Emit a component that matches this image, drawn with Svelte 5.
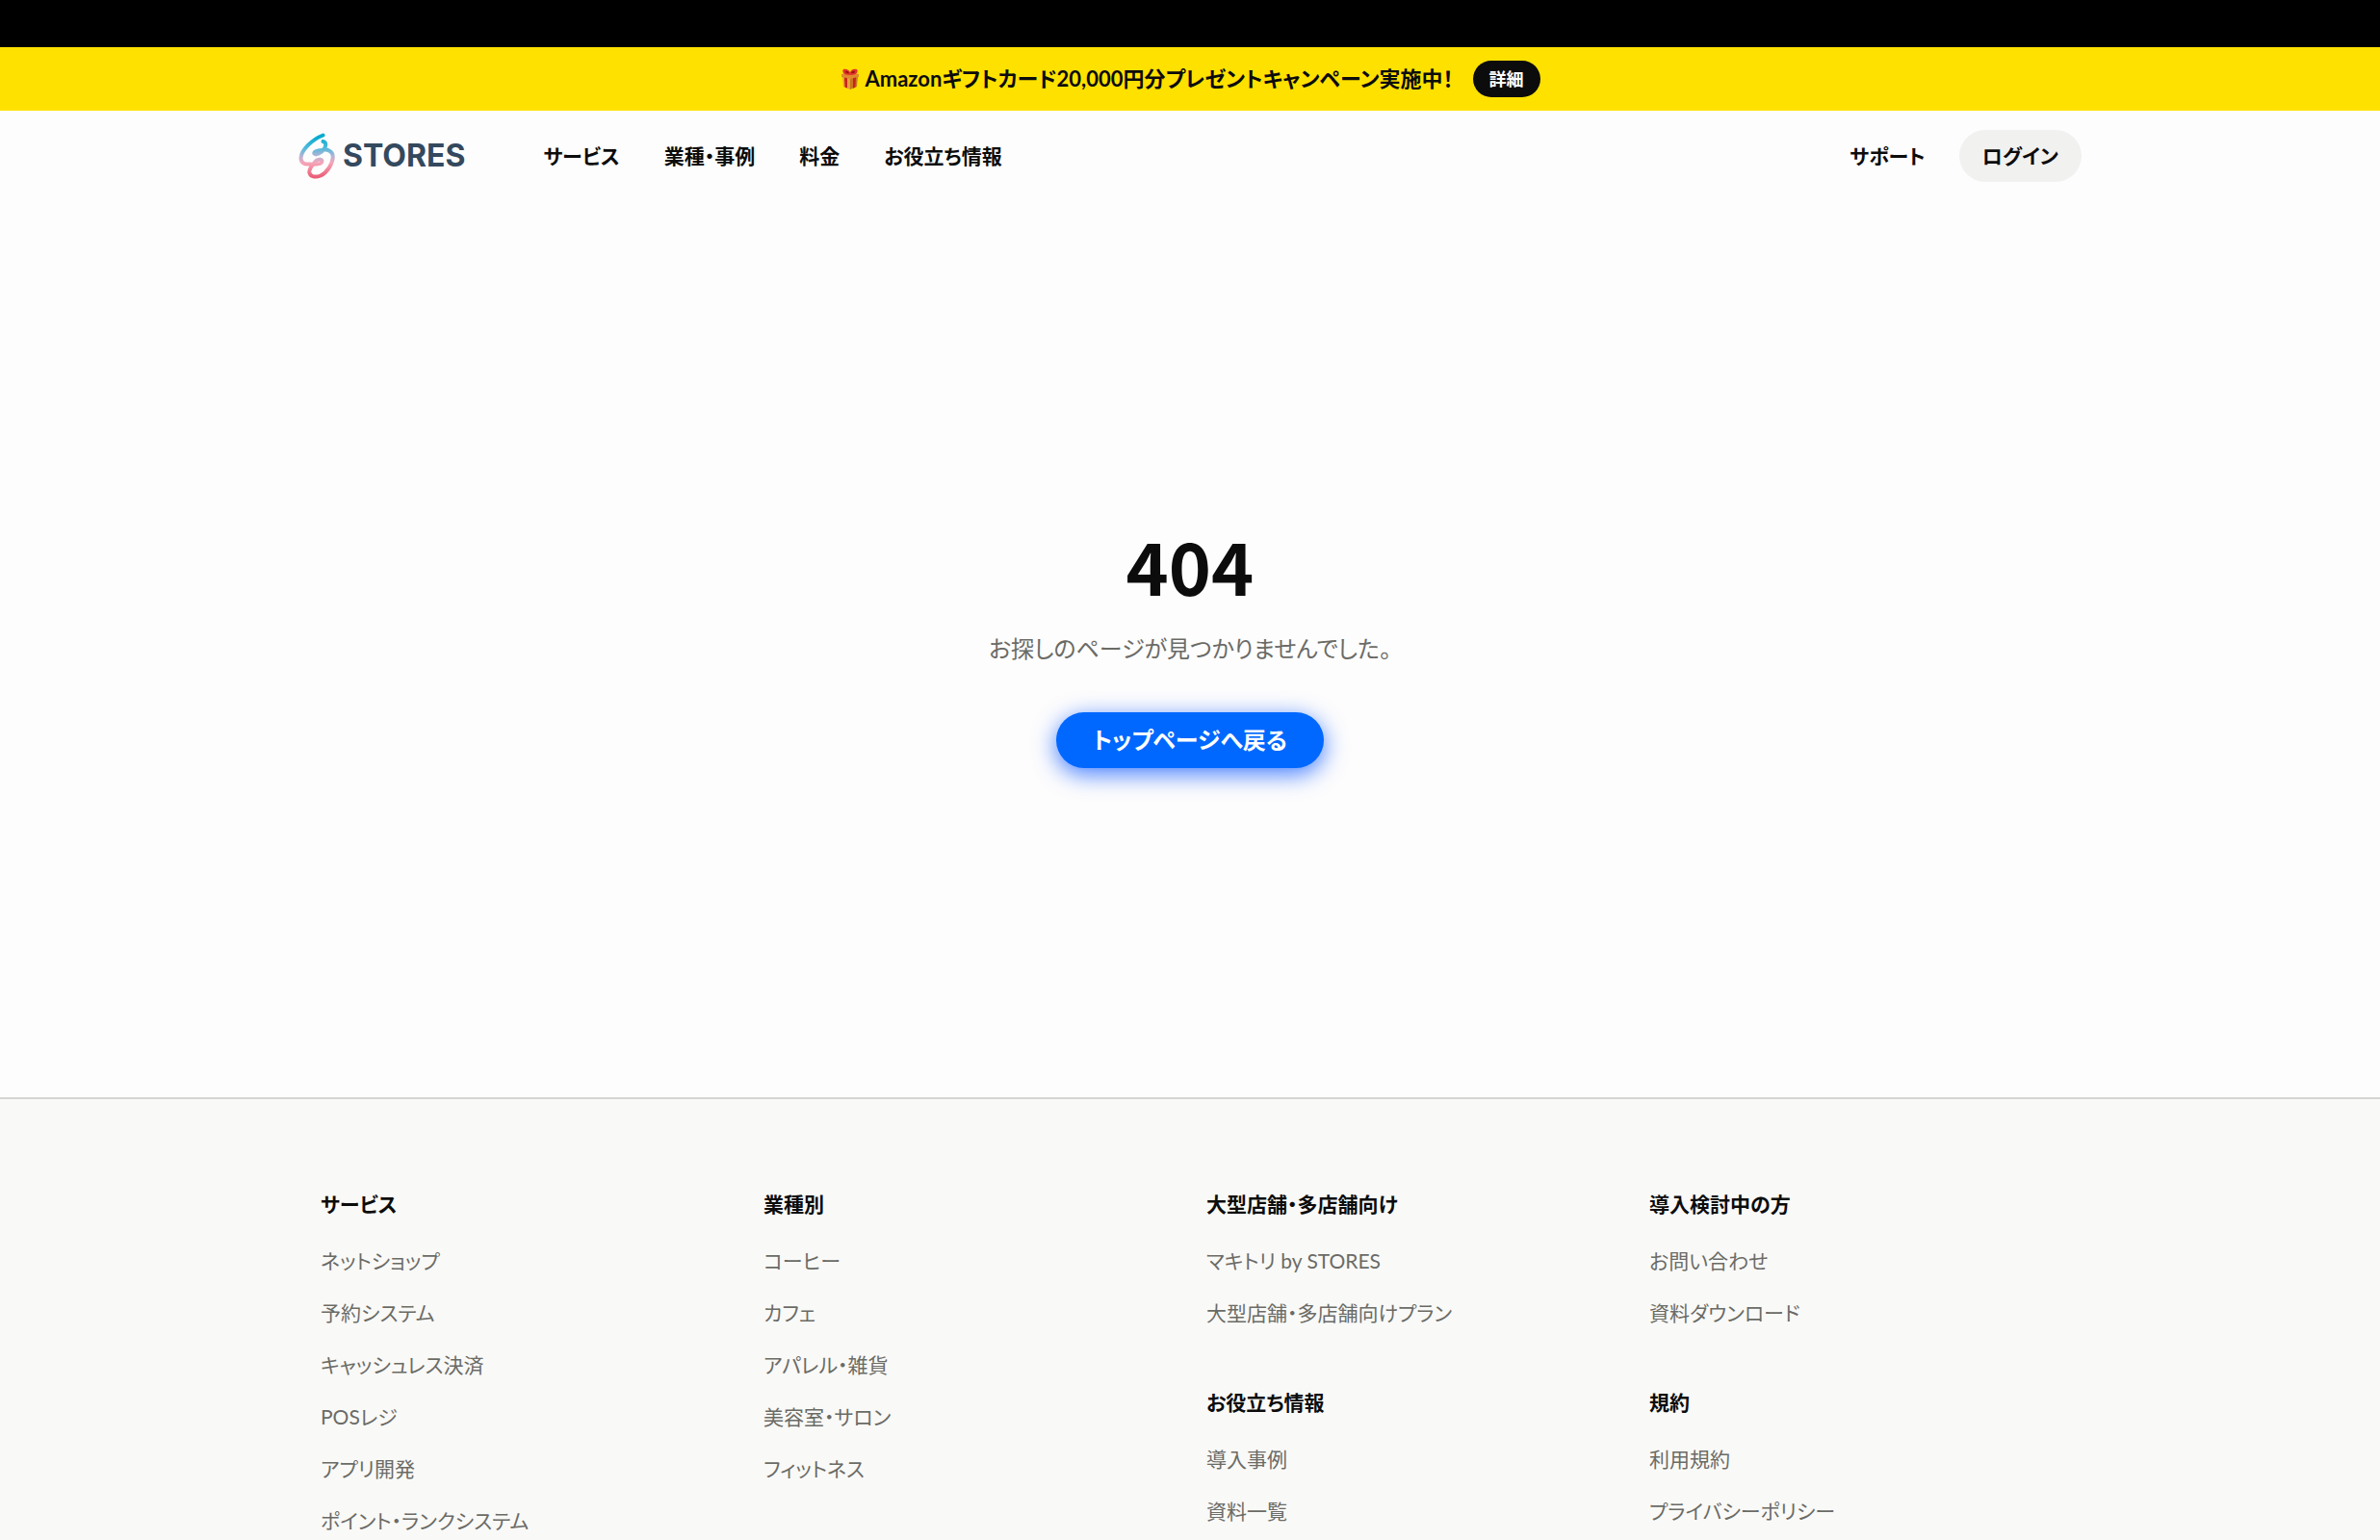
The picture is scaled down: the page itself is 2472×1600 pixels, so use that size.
<script lang="ts">
	const navItems = ['サービス', '業種・事例', '料金', 'お役立ち情報'];

	const footerColumns = [
		[
			{
				title: 'サービス',
				links: ['ネットショップ', '予約システム', 'キャッシュレス決済', 'POSレジ', 'アプリ開発', 'ポイント・ランクシステム']
			}
		],
		[
			{
				title: '業種別',
				links: ['コーヒー', 'カフェ', 'アパレル・雑貨', '美容室・サロン', 'フィットネス']
			}
		],
		[
			{ title: '大型店舗・多店舗向け', links: ['マキトリ by STORES', '大型店舗・多店舗向けプラン'] },
			{ title: 'お役立ち情報', links: ['導入事例', '資料一覧'] }
		],
		[
			{ title: '導入検討中の方', links: ['お問い合わせ', '資料ダウンロード'] },
			{ title: '規約', links: ['利用規約', 'プライバシーポリシー'] }
		]
	];
</script>

<div class="page">
	<div class="topbar"></div>

	<div class="campaign">
		<p class="campaign-text">
			<svg class="gift" viewBox="0 0 20 22" aria-hidden="true">
				<path fill="#e9a03a" d="M2 8l8 2v12l-7-3z" />
				<path fill="#c9761f" d="M10 10l8-2-1 11-7 3z" />
				<path fill="#e08a2c" d="M1 6l9-2 9 2v3l-9 2-9-2z" />
				<path fill="#c9241b" d="M4 9.500l3 .7v10.400l-2.500-1zM13 10.200l3-.7-.6 10.200-2.400 1z" />
				<path fill="#e2342a" d="M3 1c3-1 6 1 7 3 1-3 4-4 7-3 2 3-1 6-6 6h-2C4 7 1 4 3 1z" />
				<path fill="#96170f" d="M5 3c2-.5 3 0 4 2-2 .6-4 0-4-2zm10 0c-2-.5-3 0-4 2 2 .6 4 0 4-2z" />
			</svg>
			<span>Amazonギフトカード20,000円分プレゼントキャンペーン実施中！</span>
		</p>
		<a class="campaign-link" href="#campaign">詳細</a>
	</div>

	<header class="header">
		<a class="logo" href="#top">
			<svg class="logo-mark" viewBox="0 0 38 48" aria-hidden="true">
				<defs>
					<linearGradient id="mark" x1="0" y1="0" x2="0" y2="48" gradientUnits="userSpaceOnUse">
						<stop offset="0.1" stop-color="#08acd0" />
						<stop offset="0.33" stop-color="#4fbadb" />
						<stop offset="0.5" stop-color="#b3b4d6" />
						<stop offset="0.65" stop-color="#f6a5b8" />
						<stop offset="1" stop-color="#e9546f" />
					</linearGradient>
				</defs>
				<path
					class="stroke"
					d="M25.500 2.500C14 7 3 18 2.500 26C2.500 31 6 33 12 32.500C18 33 24 33 24.500 29.500C24.500 26.500 19 27.500 16.500 31C13.500 34.500 11 37.500 11.300 41C12 46 18 46.500 23 44.500C30 41 35.500 32 35.800 25C35.800 19 30 16.500 24 18C20 18.500 16 19.500 16.300 21.500C18 24 24 20.500 26.500 17C29 13.500 29 10 25.500 9"
				/>
			</svg>
			<span class="logo-text">STORES</span>
		</a>
		<nav class="nav">
			{#each navItems as item}
				<a href="#nav">{item}</a>
			{/each}
		</nav>
		<div class="account">
			<a href="#support">サポート</a>
			<a class="login" href="#login">ログイン</a>
		</div>
	</header>

	<main class="main">
		<h1>404</h1>
		<p>お探しのページが見つかりませんでした。</p>
		<a class="back" href="#top">トップページへ戻る</a>
	</main>

	<footer class="footer">
		<div class="footer-inner">
			{#each footerColumns as column}
				<div class="column">
					{#each column as group}
						<section>
							<h2>{group.title}</h2>
							<ul>
								{#each group.links as link}
									<li><a href="#link">{link}</a></li>
								{/each}
							</ul>
						</section>
					{/each}
				</div>
			{/each}
		</div>
	</footer>
</div>

<style>
:global(body) {
	margin: 0;
	background: #fdfdfd;
}

.page {
	height: 100vh;
	overflow: hidden;
	color: #0c0c0c;
	font-family: Lato, "Noto Sans CJK JP", sans-serif;
	font-size: 21px;
	line-height: 30px;
	font-feature-settings: "palt";
}

a {
	color: inherit;
	text-decoration: none;
}

h1,
h2,
p,
ul {
	margin: 0;
	padding: 0;
}

.topbar {
	height: 49px;
	background: #000;
}

.campaign {
	display: flex;
	align-items: center;
	justify-content: center;
	gap: 20px;
	height: 66px;
	background: #ffe100;
	font-weight: 700;
}

.campaign-text {
	display: flex;
	align-items: center;
	gap: 6px;
	font-size: 22px;
}

.gift {
	width: 20px;
	height: 22px;
}

.campaign-link {
	padding: 4px 17px;
	border-radius: 19px;
	background: #0c0c0c;
	color: #fff;
	font-size: 18px;
}

.header {
	display: flex;
	align-items: center;
	box-sizing: border-box;
	max-width: 1852px;
	height: 94px;
	margin: 0 auto;
	font-weight: 700;
}

.logo {
	display: flex;
	align-items: center;
	gap: 8px;
}

.logo-mark {
	width: 38px;
	height: 48px;
}

.stroke {
	fill: none;
	stroke: url(#mark);
	stroke-width: 4;
	stroke-linecap: round;
	stroke-linejoin: round;
}

.logo-text {
	color: #34495e;
	font-family: Inter, sans-serif;
	font-size: 32px;
}

.nav {
	display: flex;
	gap: 46px;
	margin-left: 81px;
}

.account {
	display: flex;
	align-items: center;
	gap: 35px;
	margin-left: auto;
}

.login {
	padding: 12px 24px;
	border-radius: 28px;
	background: #f1f1f0;
}

.main {
	display: flex;
	flex-direction: column;
	align-items: center;
	box-sizing: border-box;
	height: 931px;
	padding-top: 330px;
}

.main h1 {
	font-family: "Noto Sans CJK JP", sans-serif;
	font-size: 75px;
	line-height: 96px;
}

.main p {
	margin-top: 21px;
	color: #6b6b66;
	font-size: 24px;
	line-height: 36px;
}

.back {
	margin-top: 48px;
	padding: 11px 38px;
	border-radius: 29px;
	background: #0068ff;
	box-shadow: 0 6px 24px rgba(0, 80, 255, 0.75);
	color: #fff;
	font-size: 24px;
	font-weight: 700;
	line-height: 36px;
}

.footer {
	border-top: 2px solid #d4d6d3;
	background: #f9f9f7;
}

.footer-inner {
	display: grid;
	grid-template-columns: repeat(4, 1fr);
	gap: 34px;
	max-width: 1806px;
	margin: 0 auto;
	padding: 94px 24px;
}

.column {
	display: flex;
	flex-direction: column;
	gap: 63px;
}

.footer h2 {
	font-size: 21px;
	line-height: 30px;
}

.footer ul {
	display: grid;
	gap: 24px;
	margin-top: 29px;
	color: #6b6b66;
	list-style: none;
}
</style>
